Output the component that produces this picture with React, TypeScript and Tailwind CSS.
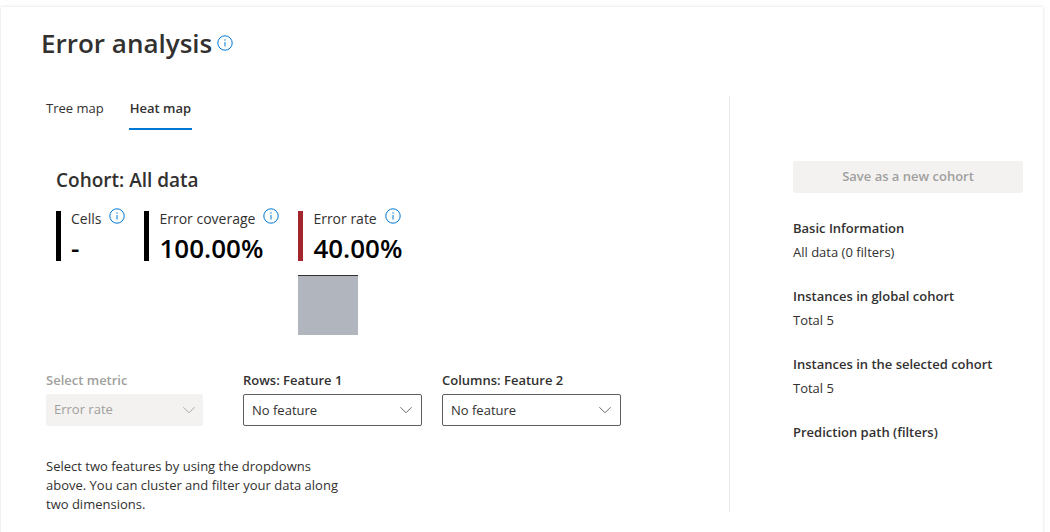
import { useState } from "react";
import type { ReactNode } from "react";

function InfoIcon() {
  return (
    <svg viewBox="0 0 16 16" className="size-4" fill="none" aria-hidden="true">
      <circle cx="8" cy="8" r="7.2" stroke="#0078d4" strokeWidth="1" />
      <path d="M8 7v4.5" stroke="#0078d4" strokeWidth="1" />
      <circle cx="8" cy="5" r="0.7" fill="#0078d4" />
    </svg>
  );
}

function InfoButton({ label }: { label: string }) {
  return (
    <button type="button" aria-label={label} className="shrink-0">
      <InfoIcon />
    </button>
  );
}

function Metric({ label, value, bar }: { label: string; value: string; bar: string }) {
  return (
    <div className="flex h-[50px] gap-[10px]">
      <div className={`w-[5px] ${bar}`} />
      <div>
        <div className="flex h-4 items-center gap-2 text-sm whitespace-nowrap">
          <span>{label}</span>
          <span className="-mt-1.5 flex">
            <InfoButton label={`About ${label}`} />
          </span>
        </div>
        <div className="text-[26px] leading-[42px] font-semibold text-black">{value}</div>
      </div>
    </div>
  );
}

type DropdownProps = {
  id: string;
  label: string;
  options: string[];
  disabled?: boolean;
};

function Dropdown({ id, label, options, disabled = false }: DropdownProps) {
  return (
    <div className={disabled ? "w-[157px] text-[#a19f9d]" : "w-[179px]"}>
      <label htmlFor={id} className="block leading-7 font-semibold">
        {label}
      </label>
      <div className="relative">
        <select
          id={id}
          disabled={disabled}
          className={`block h-8 w-full appearance-none rounded-xs pr-8 pl-2 opacity-100 ${
            disabled ? "bg-[#f3f2f1]" : "border border-[#605e5c] bg-white pt-0.5"
          }`}
        >
          {options.map((option) => (
            <option key={option}>{option}</option>
          ))}
        </select>
        <svg
          viewBox="0 0 12 12"
          className={`pointer-events-none absolute top-[10px] size-3 ${
            disabled ? "right-2 text-[#a19f9d]" : "right-[10px] text-[#605e5c]"
          }`}
          fill="none"
          aria-hidden="true"
        >
          <path d="M0.4 3.2 6 8.8l5.6-5.6" stroke="currentColor" strokeWidth="0.9" />
        </svg>
      </div>
    </div>
  );
}

function Fact({ title, children }: { title: string; children?: ReactNode }) {
  return (
    <div className="leading-6">
      <h3 className="font-semibold">{title}</h3>
      {children && <p>{children}</p>}
    </div>
  );
}

const tabs = ["Tree map", "Heat map"];

export default function App() {
  const [active, setActive] = useState("Heat map");

  return (
    <div className="flex min-h-screen bg-white pt-[7px] pr-[7px] pl-px font-['Open_Sans','Noto_Sans',sans-serif] text-[13px] text-[#323130]">
      <div className="flex flex-1 flex-col bg-white pb-5 shadow-[0_0_3px_rgba(0,0,0,0.15)]">
        <header className="flex items-center gap-[5px] pt-4 pl-10">
          <h1 className="text-[26px] leading-10 font-semibold">Error analysis</h1>
          <InfoButton label="About error analysis" />
        </header>

        <div className="flex flex-1">
          <main className="min-w-0 flex-1 pt-[23px] pl-[45px]">
            <div role="tablist" className="flex gap-[25px]">
              {tabs.map((tab) => (
                <button
                  key={tab}
                  type="button"
                  role="tab"
                  aria-selected={tab === active}
                  onClick={() => setActive(tab)}
                  className={`h-11 border-b-2 pt-1 ${
                    tab === active ? "border-[#0078d4] px-px font-semibold" : "border-transparent"
                  }`}
                >
                  {tab}
                </button>
              ))}
            </div>

            <section className="pt-[37px] pl-[10px]">
              <h2 className="text-[19px] leading-[26px] font-semibold">Cohort: All data</h2>
              <div className="mt-[18px] flex items-start gap-[19px]">
                <Metric label="Cells" value="-" bar="bg-black" />
                <Metric label="Error coverage" value="100.00%" bar="bg-black" />
                <div>
                  <Metric label="Error rate" value="40.00%" bar="bg-[#a4262c]" />
                  <div className="mt-[14px] size-[60px] border-t border-[#323130] bg-[#b1b5be]" />
                </div>
              </div>
            </section>

            <div className="flex gap-5 pt-[31px]">
              <div className="pr-5">
                <Dropdown id="metric" label="Select metric" options={["Error rate"]} disabled />
              </div>
              <Dropdown id="rows" label="Rows: Feature 1" options={["No feature"]} />
              <Dropdown id="columns" label="Columns: Feature 2" options={["No feature"]} />
            </div>

            <p className="mt-[31px] w-[300px] leading-[19px]">
              Select two features by using the dropdowns above. You can cluster and filter your data along two
              dimensions.
            </p>
          </main>

          <aside className="mt-[33px] mb-0.5 w-[314px] border-l border-[#edebe9] pt-[65px] pr-5 pl-[63px]">
            <button type="button" disabled className="h-8 w-full rounded-xs bg-[#f3f2f1] font-semibold text-[#a19f9d]">
              Save as a new cohort
            </button>
            <div className="mt-[23px] flex flex-col gap-5">
              <Fact title="Basic Information">All data (0 filters)</Fact>
              <Fact title="Instances in global cohort">Total 5</Fact>
              <Fact title="Instances in the selected cohort">Total 5</Fact>
              <Fact title="Prediction path (filters)" />
            </div>
          </aside>
        </div>
      </div>
    </div>
  );
}
